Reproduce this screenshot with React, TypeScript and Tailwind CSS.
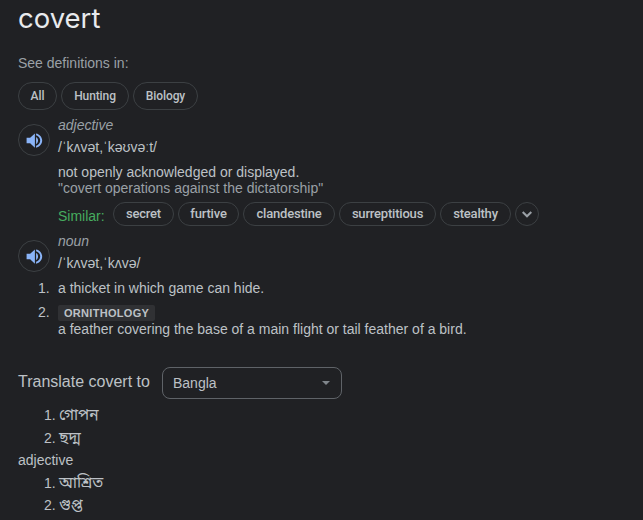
import React from "react";

function Speaker() {
  return (
    <button className="mt-[7px] flex size-8 shrink-0 items-center justify-center rounded-full border border-[#3c4043]">
      <svg viewBox="0 0 24 24" className="size-[19px]" fill="#8ab4f8">
        <path d="M2 8.500v7h4.500l6 5.500V3l-6 5.500H2zM14 7.500v9c1.600-.9 2.500-2.600 2.500-4.500S15.600 8.400 14 7.500zM14 3v2.500c3.100.8 5.200 3.400 5.200 6.500S17.100 17.700 14 18.500V21c4.500-.9 7.700-4.600 7.700-9S18.500 3.900 14 3z" />
      </svg>
    </button>
  );
}

function Heading({ part, phonetic }: { part: string; phonetic: string }) {
  return (
    <div className="flex gap-2">
      <Speaker />
      <div>
        <div className="italic text-[#9aa0a6]">{part}</div>
        <div className="mt-1.5 h-4 whitespace-nowrap">{phonetic}</div>
      </div>
    </div>
  );
}

const topics = [
  { label: "All", width: "w-[39px]" },
  { label: "Hunting", width: "w-[68px]" },
  { label: "Biology", width: "w-[65px]" },
];

const similar = [
  { label: "secret", width: "w-[61px]" },
  { label: "furtive", width: "w-[61px]" },
  { label: "clandestine", width: "w-[92px]" },
  { label: "surreptitious", width: "w-[97px]" },
  { label: "stealthy", width: "w-[71px]" },
];

function Translations({ items }: { items: string[] }) {
  return (
    <ol>
      {items.map((item, i) => (
        <li key={item} className="flex h-[22.5px] items-center gap-[3px] pl-[26px]">
          <span className="w-3">{i + 1}.</span>
          <span className="pt-0.5 font-['Noto_Sans_Bengali','Noto_Sans',sans-serif] text-[15.5px]/4">{item}</span>
        </li>
      ))}
    </ol>
  );
}

export default function App() {
  return (
    <main className="h-[520px] w-[643px] overflow-hidden bg-[#202124] pl-[18px] font-['Liberation_Sans',Arial,sans-serif] text-sm/4 text-[#bdc1c6]">
      <h1 className="h-[55px] font-['Inter',sans-serif] text-[27.5px]/9 text-[#e8eaed]">covert</h1>
      <p className="text-[#9aa0a6]">See definitions in:</p>
      <div className="mt-[11px] flex gap-1">
        {topics.map((t) => (
          <button key={t.label} className={`h-7 rounded-full border border-[#3c4043] font-['Roboto',sans-serif] text-xs font-medium tracking-[-0.1px] ${t.width}`}>
            {t.label}
          </button>
        ))}
      </div>

      <section className="mt-[7px] h-[116px]">
        <Heading part="adjective" phonetic="/ˈkʌvət,ˈkəʊvəːt/" />
        <div className="mt-2 pl-10">
          <p>not openly acknowledged or displayed.</p>
          <p className="text-[#9aa0a6]">"covert operations against the dictatorship"</p>
          <div className="mt-1.5 flex gap-1">
            <span className="mt-1.5 w-[51px] text-[#46ac5f]">Similar:</span>
            {similar.map((s) => (
              <button key={s.label} className={`h-6 rounded-full border border-[#3c4043] font-['Roboto',sans-serif] text-[13px]/5 font-medium tracking-[-0.2px] ${s.width}`}>
                {s.label}
              </button>
            ))}
            <button className="flex size-6 items-center justify-center rounded-full border border-[#3c4043]">
              <svg viewBox="0 0 24 24" className="size-4" fill="#9aa0a6">
                <path d="M12 17.500 4.500 10l2.100-2.100 5.400 5.400 5.400-5.400 2.100 2.100z" />
              </svg>
            </button>
          </div>
        </div>
      </section>

      <section className="h-[134px]">
        <Heading part="noun" phonetic="/ˈkʌvət,ˈkʌvə/" />
        <ol className="mt-2">
          <li className="flex gap-[9px] pl-5">
            <span className="w-[11px]">1.</span>
            <p>a thicket in which game can hide.</p>
          </li>
          <li className="mt-2 flex gap-[9px] pl-5">
            <span className="w-[11px]">2.</span>
            <div>
              <div className="mt-px h-4 w-[97px] rounded-xs bg-[#303134] pl-1.5 text-[11px]/4 font-bold tracking-[0.3px]">ORNITHOLOGY</div>
              <p>a feather covering the base of a main flight or tail feather of a bird.</p>
            </div>
          </li>
        </ol>
      </section>

      <div className="flex gap-3">
        <span className="w-[132px] whitespace-nowrap pt-[5px] text-base/5">Translate covert to</span>
        <button className="flex h-8 w-[180px] items-center justify-between rounded-lg border border-[#5f6368] pr-[11px] pl-2.5">
          <span>Bangla</span>
          <svg viewBox="0 0 8 4" className="h-1 w-2" fill="#80868b">
            <path d="M0 0h8L4 4z" />
          </svg>
        </button>
      </div>
      <div className="mt-[5px]">
        <Translations items={["গোপন", "ছদ্ম"]} />
        <div className="flex h-[22.5px] items-center">adjective</div>
        <Translations items={["আশ্রিত", "গুপ্ত"]} />
      </div>
    </main>
  );
}
